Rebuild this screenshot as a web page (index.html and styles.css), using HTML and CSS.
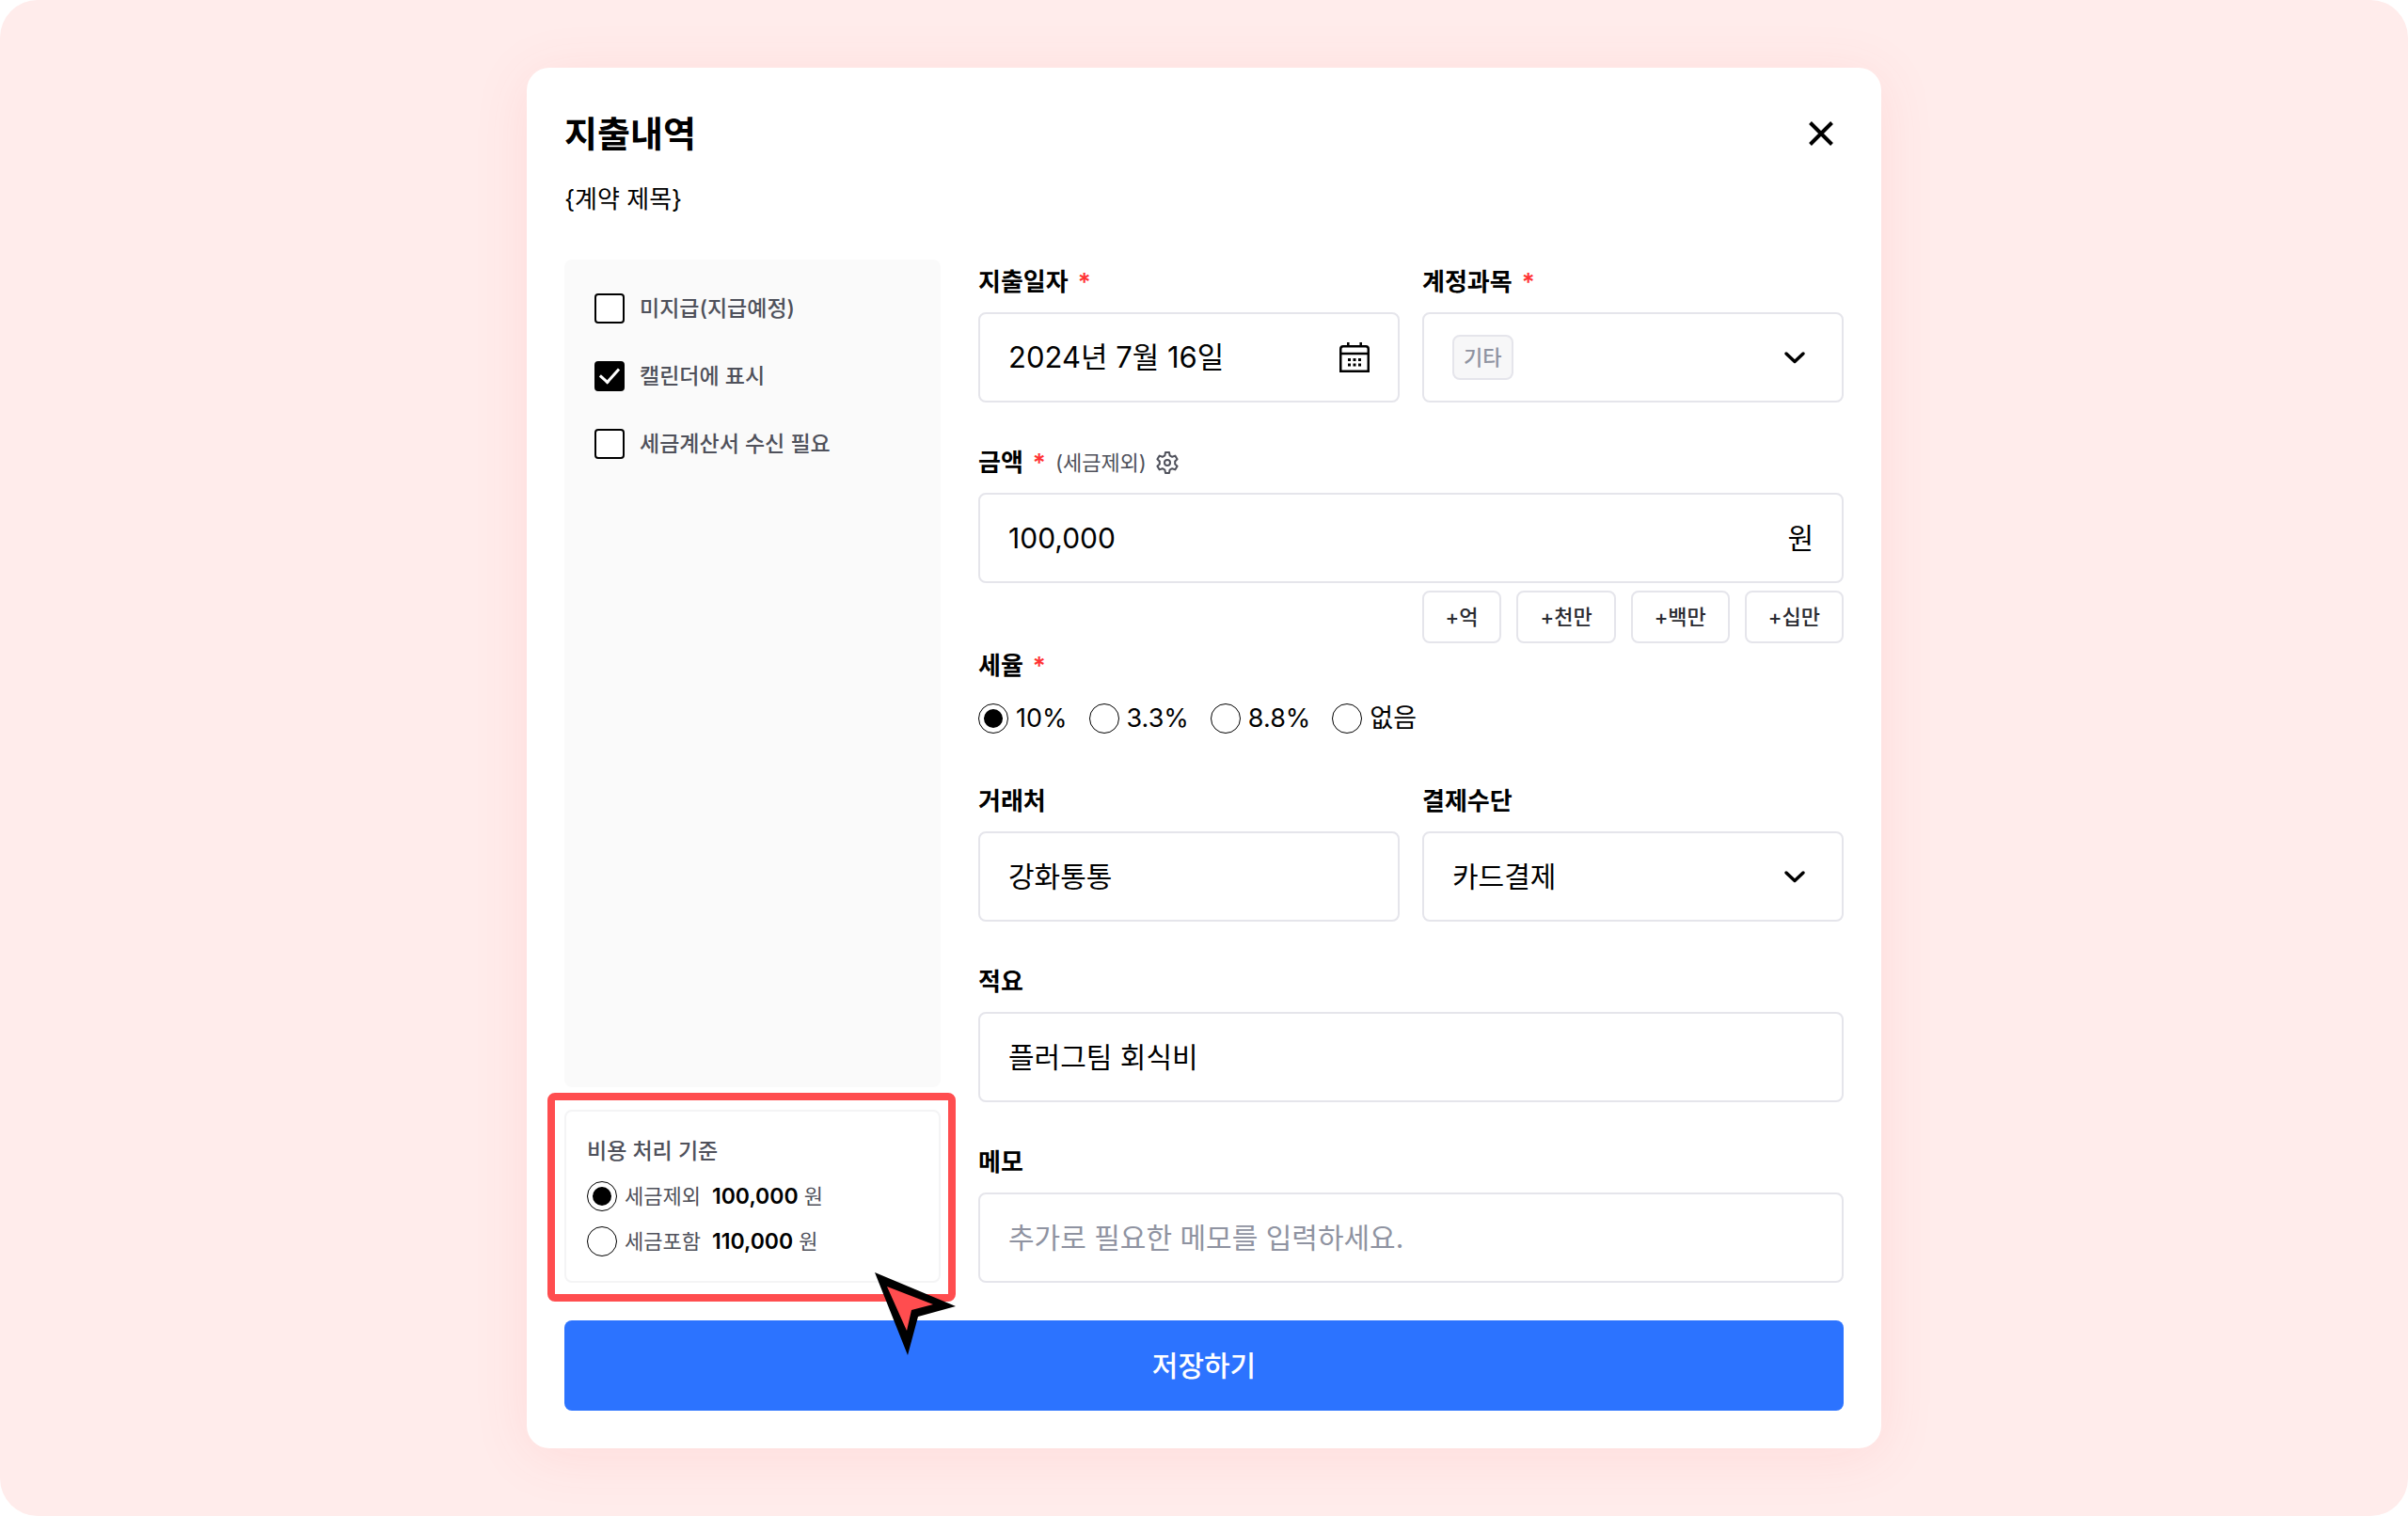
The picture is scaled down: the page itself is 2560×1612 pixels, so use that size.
FILE: index.html
```html
<!DOCTYPE html>
<html lang="ko">
<head>
  <meta charset="UTF-8">
  <meta name="viewport" content="width=device-width, initial-scale=1.0">
  <title>지출내역</title>
  <link rel="stylesheet" href="styles.css">
</head>
<body>
  <main class="stage">
    <form class="modal">
      <header class="modal-header">
        <h1>지출내역</h1>
        <button type="button" class="close-btn" aria-label="닫기">
          <svg viewBox="0 0 48 48" width="48" height="48" fill="none" stroke="#000" stroke-width="4">
            <path d="M12.5 12.5L35.5 35.5M35.5 12.5L12.5 35.5"/>
          </svg>
        </button>
      </header>
      <p class="subtitle">{계약 제목}</p>

      <div class="modal-body">
        <aside class="side">
          <div class="options">
            <label class="check"><input type="checkbox"> 미지급(지급예정)</label>
            <label class="check"><input type="checkbox" checked> 캘린더에 표시</label>
            <label class="check"><input type="checkbox"> 세금계산서 수신 필요</label>
          </div>

          <div class="cost-wrap">
            <fieldset class="cost-box" aria-labelledby="costTitle">
              <h2 class="cost-title" id="costTitle">비용 처리 기준</h2>
              <label class="cost-row"><input type="radio" name="basis" checked> 세금제외 <span class="sum"><strong>100,000</strong> 원</span></label>
              <label class="cost-row"><input type="radio" name="basis"> 세금포함 <span class="sum"><strong>110,000</strong> 원</span></label>
            </fieldset>
            <svg class="pointer" viewBox="0 0 86 88" width="86" height="88">
              <path d="M0 0L86 36L46 47L35 88Z" fill="#000"/>
              <path d="M13 15L62 34L39 40L34 62Z" fill="#ff4d4f"/>
            </svg>
          </div>
        </aside>

        <div class="fields">
          <div class="field">
            <div class="field-label"><label for="date">지출일자</label> <span class="required">*</span></div>
            <div class="control">
              <input type="text" id="date" class="mixed" value="2024년 7월 16일">
              <button type="button" class="icon-btn" aria-label="달력">
                <svg viewBox="0 0 32 32" width="32" height="32" fill="none" stroke="#000" stroke-width="2.5">
                  <path d="M1.25 30.75V7Q1.25 4.25 4 4.25H28Q30.75 4.25 30.75 7V30.75ZM1 12H31M9.3 0V4M22.7 0V4"/>
                  <path d="M9 18.5H24M9 24H24" stroke-width="3" stroke-dasharray="3 2.5"/>
                </svg>
              </button>
            </div>
          </div>

          <div class="field">
            <div class="field-label"><label for="category">계정과목</label> <span class="required">*</span></div>
            <div class="control">
              <select id="category" class="tag">
                <option>기타</option>
              </select>
              <svg class="chevron" viewBox="0 0 32 32" width="32" height="32" fill="none" stroke="#000" stroke-width="3.5" stroke-linecap="round" stroke-linejoin="round">
                <path d="M7 12L16 20.5L25 12"/>
              </svg>
            </div>
          </div>

          <div class="field wide">
            <div class="field-label">
              <label for="amount">금액</label> <span class="required">*</span>
              <span class="note">(세금제외)</span>
              <button type="button" class="icon-btn" aria-label="설정">
                <svg viewBox="0 0 24 24" width="24" height="24" fill="none" stroke="#4f515b" stroke-width="2" stroke-linejoin="round">
                  <path d="M10 1H14L14.6 4.3L17.2 5.8L20.3 4.6L22.6 8.2L20.2 10.5V13.5L22.6 15.8L20.3 19.4L17.2 18.2L14.6 19.7L14 23H10L9.4 19.7L6.8 18.2L3.7 19.4L1.4 15.8L3.8 13.5V10.5L1.4 8.2L3.7 4.6L6.8 5.8L9.4 4.3Z"/>
                  <circle cx="12" cy="12" r="3"/>
                </svg>
              </button>
            </div>
            <div class="control">
              <input type="text" id="amount" value="100,000">
              <span class="unit">원</span>
            </div>
            <div class="quick-add">
              <button type="button">+억</button>
              <button type="button">+천만</button>
              <button type="button">+백만</button>
              <button type="button">+십만</button>
            </div>
          </div>

          <div class="field wide tax" role="radiogroup" aria-labelledby="taxLabel">
            <div class="field-label"><span id="taxLabel">세율</span> <span class="required">*</span></div>
            <div class="radios">
              <label><input type="radio" name="tax" checked> 10%</label>
              <label><input type="radio" name="tax"> 3.3%</label>
              <label><input type="radio" name="tax"> 8.8%</label>
              <label><input type="radio" name="tax"> 없음</label>
            </div>
          </div>

          <div class="field">
            <div class="field-label"><label for="client">거래처</label></div>
            <div class="control"><input type="text" id="client" value="강화통통"></div>
          </div>

          <div class="field">
            <div class="field-label"><label for="payment">결제수단</label></div>
            <div class="control">
              <select id="payment">
                <option>카드결제</option>
              </select>
              <svg class="chevron" viewBox="0 0 32 32" width="32" height="32" fill="none" stroke="#000" stroke-width="3.5" stroke-linecap="round" stroke-linejoin="round">
                <path d="M7 12L16 20.5L25 12"/>
              </svg>
            </div>
          </div>

          <div class="field wide">
            <div class="field-label"><label for="summary">적요</label></div>
            <div class="control"><input type="text" id="summary" value="플러그팀 회식비"></div>
          </div>

          <div class="field wide">
            <div class="field-label"><label for="memo">메모</label></div>
            <div class="control"><input type="text" id="memo" placeholder="추가로 필요한 메모를 입력하세요."></div>
          </div>
        </div>
      </div>

      <button type="submit" class="save-btn">저장하기</button>
    </form>
  </main>
</body>
</html>
```
FILE: styles.css
```css
* {
  box-sizing: border-box;
}
body {
  margin: 0;
  background: #fff;
  color: #000;
  font-family: Inter, "Noto Sans CJK KR", sans-serif;
  font-size: 26px;
  line-height: 48px;
}
h1, h2, p {
  margin: 0;
}
button, input, select {
  font-family: inherit;
  line-height: inherit;
  color: inherit;
  margin: 0;
}
button {
  padding: 0;
  border: none;
  background: none;
  cursor: pointer;
}
svg {
  display: block;
}

.stage {
  min-height: 100vh;
  padding: 72px 24px;
  background: #ffeceb;
  border-radius: 40px;
}
.modal {
  max-width: 1440px;
  margin: 0 auto;
  padding: 40px;
  background: #fff;
  border-radius: 24px;
  box-shadow: 0 8px 60px rgba(255, 77, 79, 0.1);
}
.modal-header {
  display: flex;
  align-items: center;
  justify-content: space-between;
  height: 60px;
  margin-bottom: 16px;
}
.modal-header h1 {
  font-size: 38px;
  font-weight: 600;
}
.modal-body {
  display: grid;
  grid-template-columns: 400px minmax(0, 1fr);
  gap: 40px;
  margin: 40px 0;
}

/* Left column */
.side {
  display: flex;
  flex-direction: column;
  gap: 24px;
}
.options {
  flex: 1;
  display: flex;
  flex-direction: column;
  gap: 24px;
  padding: 28px 32px;
  background: #fafafa;
  border-radius: 8px;
}
.check {
  display: flex;
  align-items: center;
  gap: 16px;
  height: 48px;
  color: #4f515b;
  font-size: 23px;
  font-weight: 500;
}
input[type="checkbox"] {
  appearance: none;
  display: grid;
  place-items: center;
  width: 32px;
  height: 32px;
  border: 2px solid #000;
  border-radius: 4px;
  background: #fff;
}
input[type="checkbox"]:checked {
  background: #000;
}
input[type="checkbox"]:checked::before {
  content: "";
  width: 9px;
  height: 17px;
  margin-bottom: 6px;
  border: solid #fff;
  border-width: 0 3px 3px 0;
  transform: rotate(42deg);
}
input[type="radio"] {
  appearance: none;
  flex: none;
  display: grid;
  place-items: center;
  width: 32px;
  height: 32px;
  border: 1px solid #000;
  border-radius: 50%;
  background: #fff;
}
input[type="radio"]:checked::before {
  content: "";
  width: 20px;
  height: 20px;
  border-radius: 50%;
  background: #000;
}
.cost-wrap {
  position: relative;
}
.cost-wrap::after {
  content: "";
  position: absolute;
  inset: -18px -16px -20px -18px;
  border: 8px solid #ff4d4f;
  border-radius: 8px;
  pointer-events: none;
}
.cost-box {
  margin: 0;
  padding: 18px 22px;
  border: 2px solid #f4f4f5;
  border-radius: 8px;
  color: #4f515b;
  font-size: 22px;
}
.cost-title {
  font-size: 23px;
  font-weight: 500;
}
.cost-row {
  display: flex;
  align-items: center;
  gap: 8px;
  height: 48px;
}
.sum {
  margin-left: 4px;
}
.sum strong {
  color: #000;
  font-size: 23px;
  font-weight: 600;
}
.pointer {
  position: absolute;
  left: 330px;
  top: 173px;
  z-index: 1;
}

/* Right column */
.fields {
  display: grid;
  grid-template-columns: repeat(2, minmax(0, 1fr));
  gap: 40px 24px;
}
.wide {
  grid-column: 1 / -1;
}
.tax {
  margin-top: -40px;
}
.field-label {
  display: flex;
  align-items: center;
  gap: 10px;
  height: 48px;
  margin-bottom: 8px;
  font-weight: 600;
}
.required {
  color: #ff3333;
}
.note {
  color: #4f515b;
  font-size: 22px;
  font-weight: 400;
}
.control {
  display: flex;
  align-items: center;
  justify-content: space-between;
  height: 96px;
  padding: 0 30px;
  border: 2px solid #e5e5eb;
  border-radius: 8px;
}
.control input, .control select {
  flex: 1;
  min-width: 0;
  height: 48px;
  padding: 0;
  border: none;
  outline: none;
  background: none;
  font-size: 30px;
}
.control input::placeholder {
  color: #8f93a1;
}
.control .mixed {
  font-size: 31px;
}
.control select {
  appearance: none;
}
.control .tag {
  flex: none;
  padding: 0 10px;
  border: 2px solid #e5e5eb;
  border-radius: 8px;
  background: #f7f7f8;
  color: #8f93a1;
  font-size: 22px;
  font-weight: 500;
  line-height: 44px;
}
.chevron {
  margin-right: 4px;
}
.unit {
  font-size: 30px;
}
.quick-add {
  display: flex;
  justify-content: flex-end;
  gap: 16px;
  margin-top: 8px;
}
.quick-add button {
  height: 56px;
  padding: 0 23px;
  border: 2px solid #e5e5eb;
  border-radius: 8px;
  color: #2a2b31;
  font-size: 22px;
  font-weight: 500;
}
.radios {
  display: flex;
  gap: 23px;
  height: 48px;
  font-size: 27px;
}
.radios label {
  display: flex;
  align-items: center;
  gap: 8px;
}

.save-btn {
  display: block;
  width: 100%;
  height: 96px;
  border-radius: 8px;
  background: #2c73ff;
  color: #fff;
  font-size: 30px;
  font-weight: 500;
}
```
